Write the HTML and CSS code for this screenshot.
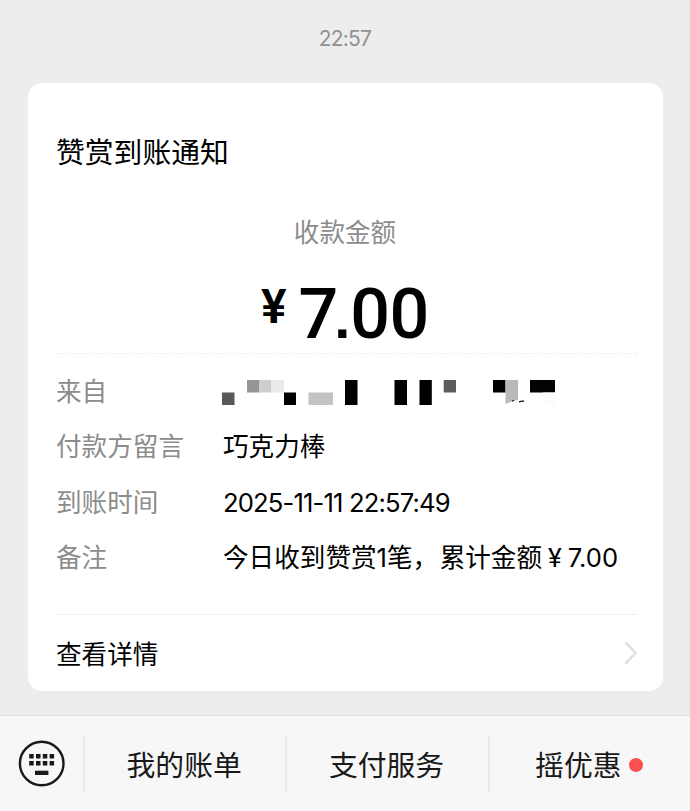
FILE: index.html
```
<!DOCTYPE html>
<html lang="zh-CN">
<head>
  <meta charset="UTF-8">
  <meta name="viewport" content="width=device-width, initial-scale=1.0">
  <title>赞赏到账通知</title>
  <link rel="stylesheet" href="styles.css">
</head>

<body>

  <main class="chat">
    <div class="time">22:57</div>

    <section class="card">
      <h1>赞赏到账通知</h1>
      <p class="amount-label">收款金额</p>
      <div class="amount"><span class="currency">¥</span><span class="value"><span class="yuan">7</span><span class="point">.</span>00</span></div>

      <dl class="details">
        <dt>来自</dt>
        <dd>
          <!-- hidden sender name -->
          <svg class="mosaic" width="334" height="26" viewBox="0 0 334 26">
            <rect x="0" y="12.5" width="12.5" height="12.5" fill="#595959"/>
            <rect x="25" y="0" width="12.2" height="12.5" fill="#969696"/>
            <rect x="37" y="0" width="12.2" height="12.5" fill="#cecece"/>
            <rect x="49" y="0" width="13" height="12.5" fill="#ebebeb"/>
            <rect x="62" y="12.5" width="12" height="12.5" fill="#000"/>
            <rect x="86.5" y="12.5" width="24.5" height="12.5" fill="#c3c3c3"/>
            <rect x="123" y="0" width="12.5" height="25" fill="#000"/>
            <rect x="172.5" y="0" width="12.5" height="25" fill="#000"/>
            <rect x="197.5" y="0" width="12.3" height="25" fill="#000"/>
            <rect x="221.7" y="0" width="12.3" height="12.5" fill="#5c5c5c"/>
            <rect x="271" y="0" width="12.5" height="12.5" fill="#000"/>
            <path d="M283.5 0H296V20L291 21L283.5 24Z" fill="#b9b9b9"/>
            <path d="M290 21.2l2-1M297 21.8l4-.8 1 .5" fill="none" stroke="#111" stroke-width="1.2"/>
            <rect x="308" y="0" width="25" height="12.5" fill="#030303"/>
            <rect x="321" y="12.5" width="12" height="12.5" fill="#fcfcfc"/>
          </svg>
        </dd>
        <dt>付款方留言</dt>
        <dd>巧克力棒</dd>
        <dt>到账时间</dt>
        <dd class="date">2025-11-11 22:57:49</dd>
        <dt>备注</dt>
        <dd>今日收到赞赏1笔，<span class="total">累计金额</span><span class="yen">¥</span>7.00</dd>
      </dl>

      <a class="more">
        <span>查看详情</span>
        <svg width="14" height="24" viewBox="0 0 14 24" fill="none" stroke="#dedede" stroke-width="2.4" stroke-linecap="round" stroke-linejoin="round">
          <path d="M3.2 2.2L12.6 12L3.2 21.8"/>
        </svg>
      </a>
    </section>
  </main>

  <nav class="menu">
    <button class="keyboard" aria-label="键盘">
      <svg width="48" height="48" viewBox="0 0 48 48" fill="#191919">
        <circle cx="23.7" cy="23.5" r="21.8" fill="none" stroke="#191919" stroke-width="2.4"/>
        <path d="M11.2 14h4.5v4.5h-4.5zM18 14h4.5v4.5h-4.5zM24.8 14h4.5v4.5h-4.5zM31.6 14h4.5v4.5h-4.5z"/>
        <path d="M11.2 21h4.5v4.5h-4.5zM18 21h4.5v4.5h-4.5zM24.8 21h4.5v4.5h-4.5zM31.6 21h4.5v4.5h-4.5z"/>
        <path d="M17 30.7h13.4v4.3h-13.4z"/>
      </svg>
    </button>
    <button class="item">我的账单</button>
    <button class="item">支付服务</button>
    <button class="item">摇优惠<span class="dot"></span></button>
  </nav>

</body>
</html>
```

FILE: styles.css
```
:root {
  --bg-color: #ededed;
  --card-color: #fff;
  --text-color: #000;
  --muted-color: #8c8c8c;
  --menu-color: #f7f7f7;
  --dot-color: #fa5151;
}

* {
  margin: 0;
  padding: 0;
  box-sizing: border-box;
}

body {
  height: 811px;
  display: flex;
  flex-direction: column;
  background: var(--bg-color);
  color: var(--text-color);
  font-family: Inter, 'Noto Sans CJK SC', sans-serif;
  font-weight: 400;
  overflow: hidden;
}

.chat {
  flex: 1;
  padding: 23px 27px 0 28px;
}

.time {
  height: 59.5px;
  padding-right: 1px;
  line-height: 32px;
  text-align: center;
  font-size: 21px;
  letter-spacing: -0.8px;
  color: #919191;
}

.card {
  height: 608.5px;
  display: flex;
  flex-direction: column;
  padding: 50.5px 26px 0 28px;
  background: var(--card-color);
  border-radius: 14px;
}

h1 {
  line-height: 40px;
  font-size: 28.8px;
  font-weight: 400;
}

.amount-label {
  margin-top: 40px;
  padding-right: 3px;
  line-height: 40px;
  text-align: center;
  font-size: 25.6px;
  color: var(--muted-color);
}

.amount {
  height: 101px;
  display: flex;
  justify-content: center;
  align-items: flex-start;
  padding-right: 3px;
  border-bottom: 1px dashed #efefef;
  font-family: Roboto, sans-serif;
  font-weight: 500;
}

.currency {
  margin: 31px 12px 0 0;
  line-height: 46px;
  font-size: 48px;
  font-weight: 600;
}

.value {
  margin-top: 21px;
  line-height: 80px;
  font-size: 70px;
  letter-spacing: -0.3px;
}

.yuan {
  letter-spacing: -4px;
}

.point {
  font-family: 'Liberation Sans', sans-serif;
  font-weight: 700;
  font-size: 58px;
  line-height: 1;
}

.details {
  display: grid;
  grid-template-columns: 167px 1fr;
  grid-auto-rows: 55.5px;
  align-items: center;
  margin-top: 10px;
  font-size: 25.6px;
  line-height: 40px;
  white-space: nowrap;
}

.details dt {
  color: var(--muted-color);
}

.mosaic {
  display: block;
  margin: 3px 0 0 -1px;
}

.date {
  letter-spacing: -0.85px;
}

.total {
  margin-left: 1.5px;
}

.yen {
  margin: 0 6px;
  font-family: Roboto, sans-serif;
  font-size: 26px;
}

.more {
  flex: 1;
  display: flex;
  justify-content: space-between;
  align-items: center;
  margin-top: 28px;
  padding-bottom: 1px;
  border-top: 1px solid #efefef;
  font-size: 25.6px;
}

.menu {
  height: 96px;
  display: flex;
  align-items: center;
  background: var(--menu-color);
  border-top: 1px solid #dcdcdc;
}

button {
  border: none;
  background: none;
  font: inherit;
  color: #191919;
}

.keyboard {
  width: 83px;
  height: 48px;
  padding-left: 18px;
  text-align: left;
}

.item {
  flex: 1;
  height: 56px;
  display: flex;
  justify-content: center;
  align-items: center;
  padding-right: 2px;
  border-left: 2px solid #e9e9e9;
  font-size: 28.8px;
}

.dot {
  width: 14px;
  height: 14px;
  margin: 2px 0 0 7px;
  border-radius: 50%;
  background: var(--dot-color);
}
```
